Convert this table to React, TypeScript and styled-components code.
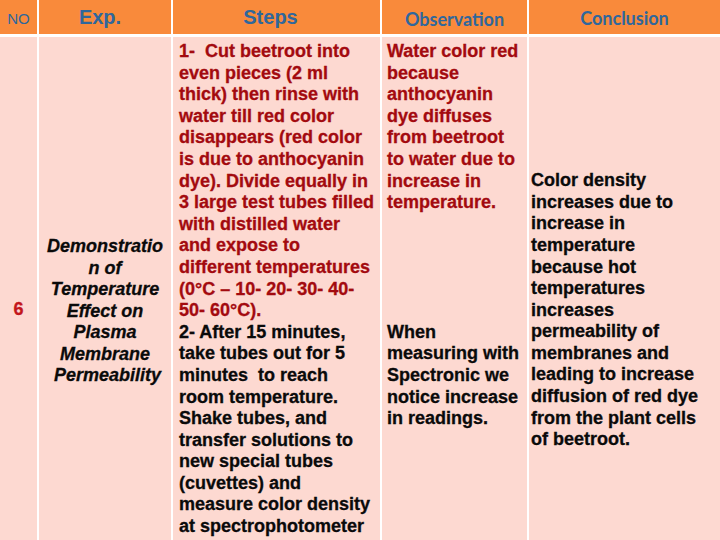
import React from "react";
import styled, { createGlobalStyle } from "styled-components";

const Global = createGlobalStyle`
  html, body { margin: 0; padding: 0; overflow: hidden; background: #ffffff; }
  body { font-family: "Liberation Sans", Arial, sans-serif; }
`;

const Table = styled.div`
  display: grid;
  grid-template-columns: 37px 132px 207px 145px 1fr;
  grid-template-rows: 34px 545px;
  column-gap: 2px;
  row-gap: 3px;
  width: 720px;
  height: 540px;
  overflow: hidden;
  background: #ffffff;
`;

const HeadCell = styled.div<{ $font?: string; $size: number; $weight: number; $pr?: number; $pt?: number }>`
  background: #f98a3b;
  color: #2f679c;
  display: flex;
  align-items: center;
  justify-content: center;
  font-family: ${(p) => p.$font ?? `"Liberation Sans", Arial, sans-serif`};
  font-size: ${(p) => p.$size}px;
  font-weight: ${(p) => p.$weight};
  padding-right: ${(p) => p.$pr ?? 0}px;
  padding-top: ${(p) => p.$pt ?? 0}px;
  white-space: nowrap;
`;

const BodyCell = styled.div<{ $center?: boolean; $middle?: boolean; $pl?: number; $pt: number }>`
  background: #fdd9d1;
  display: flex;
  flex-direction: column;
  justify-content: ${(p) => (p.$center || p.$middle ? "center" : "flex-start")};
  align-items: ${(p) => (p.$center ? "center" : "flex-start")};
  padding: ${(p) => p.$pt}px 0 0 ${(p) => p.$pl ?? 0}px;
  font-size: 18px;
  font-weight: 700;
  line-height: 21.6px;
  white-space: pre;
`;

const Line = styled.div<{ $tone: "red" | "black"; $italic?: boolean }>`
  color: ${(p) => (p.$tone === "red" ? "#a30a0f" : "#0a0a0a")};
  font-style: ${(p) => (p.$italic ? "italic" : "normal")};
  -webkit-text-stroke: 0.3px currentColor;
`;

const Gap = styled.div<{ $lines: number }>`
  height: ${(p) => p.$lines * 21.6}px;
`;

const NumberText = styled.div`
  color: #c3161c;
  font-size: 18px;
  font-weight: 700;
  -webkit-text-stroke: 0.3px currentColor;
`;

const stepsRed = [
  "1-  Cut beetroot into",
  "even pieces (2 ml",
  "thick) then rinse with",
  "water till red color",
  "disappears (red color",
  "is due to anthocyanin",
  "dye). Divide equally in",
  "3 large test tubes filled",
  "with distilled water",
  "and expose to",
  "different temperatures",
  "(0°C – 10- 20- 30- 40-",
  "50- 60°C).",
];
const stepsBlack = [
  "2- After 15 minutes,",
  "take tubes out for 5",
  "minutes  to reach",
  "room temperature.",
  "Shake tubes, and",
  "transfer solutions to",
  "new special tubes",
  "(cuvettes) and",
  "measure color density",
  "at spectrophotometer",
];
const obsRed = [
  "Water color red",
  "because",
  "anthocyanin",
  "dye diffuses",
  "from beetroot",
  "to water due to",
  "increase in",
  "temperature.",
];
const obsBlack = ["When", "measuring with", "Spectronic we", "notice increase", "in readings."];
const exp = ["Demonstratio", "n of", "Temperature", "Effect on", "Plasma", "Membrane", " Permeability"];
const concl = [
  "Color density",
  "increases due to",
  "increase in",
  "temperature",
  "because hot",
  "temperatures",
  "increases",
  "permeability of",
  "membranes and",
  "leading to increase",
  "diffusion of red dye",
  "from the plant cells",
  "of beetroot.",
];

export default function App() {
  return (
    <>
      <Global />
      <Table>
        <HeadCell $size={15} $weight={400} $pt={2}>NO</HeadCell>
        <HeadCell $size={20} $weight={700} $pr={10}>Exp.</HeadCell>
        <HeadCell $size={20} $weight={700} $pr={12}>Steps</HeadCell>
        <HeadCell $font={`Lato, "Open Sans", sans-serif`} $size={18} $weight={700} $pt={3}>Observation</HeadCell>
        <HeadCell $font={`Lato, "Open Sans", sans-serif`} $size={18} $weight={700} $pt={1}>Conclusion</HeadCell>

        <BodyCell $center $pt={1}>
          <NumberText>6</NumberText>
        </BodyCell>
        <BodyCell $center $pt={4}>
          {exp.map((l, i) => (
            <Line key={i} $tone="black" $italic>{l}</Line>
          ))}
        </BodyCell>
        <BodyCell $pl={6} $pt={4}>
          {stepsRed.map((l, i) => (
            <Line key={"r" + i} $tone="red">{l}</Line>
          ))}
          {stepsBlack.map((l, i) => (
            <Line key={"b" + i} $tone="black">{l}</Line>
          ))}
        </BodyCell>
        <BodyCell $pl={5} $pt={4}>
          {obsRed.map((l, i) => (
            <Line key={"r" + i} $tone="red">{l}</Line>
          ))}
          <Gap $lines={5} />
          {obsBlack.map((l, i) => (
            <Line key={"b" + i} $tone="black">{l}</Line>
          ))}
        </BodyCell>
        <BodyCell $middle $pl={2} $pt={2}>
          {concl.map((l, i) => (
            <Line key={i} $tone="black">{l}</Line>
          ))}
        </BodyCell>
      </Table>
    </>
  );
}
